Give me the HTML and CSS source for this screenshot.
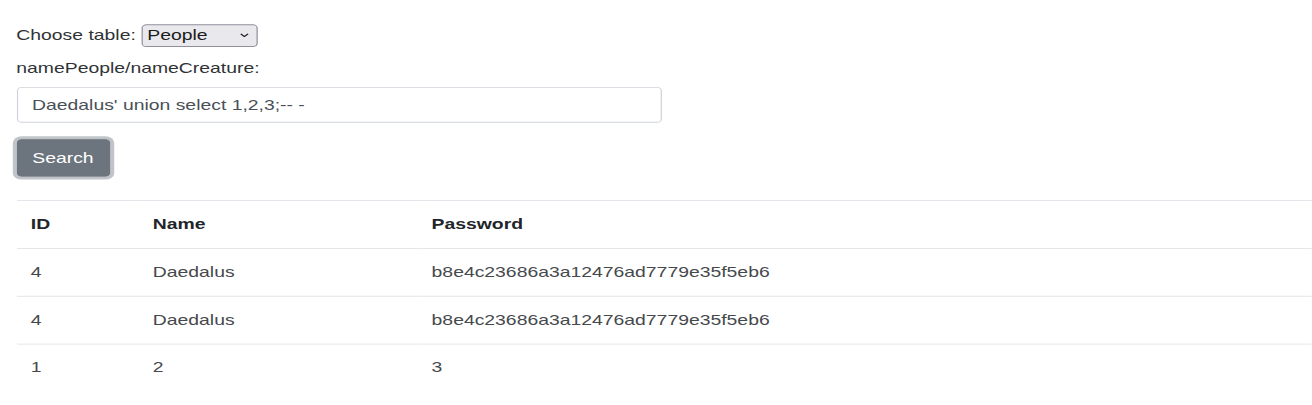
FILE: index.html
```html
<!DOCTYPE html>
<html lang="en">
<head>
<meta charset="utf-8">
<title>Search</title>
<link rel="stylesheet" href="styles.css">
</head>
<body>
<div class="page">
  <form class="search-form">
    <div class="choose-row">
      <label for="table-choice">Choose table: </label>
      <select id="table-choice" class="table-select">
        <option>People</option>
        <option>Creatures</option>
      </select>
    </div>
    <label class="field-label" for="name">namePeople/nameCreature:</label>
    <input class="form-control" id="name" type="text" value="Daedalus' union select 1,2,3;-- -">
    <button class="btn" type="button">Search</button>
  </form>
  <table class="data-table">
    <thead>
      <tr><th class="col-id">ID</th><th class="col-name">Name</th><th>Password</th></tr>
    </thead>
    <tbody>
      <tr><td>4</td><td>Daedalus</td><td>b8e4c23686a3a12476ad7779e35f5eb6</td></tr>
      <tr><td>4</td><td>Daedalus</td><td>b8e4c23686a3a12476ad7779e35f5eb6</td></tr>
      <tr><td>1</td><td>2</td><td>3</td></tr>
    </tbody>
  </table>
</div>
</body>
</html>
```
FILE: styles.css
```css
html, body {
  margin: 0;
  padding: 0;
  background: #ffffff;
}

body {
  font-family: "Liberation Sans", Arial, sans-serif;
  font-size: 16px;
  line-height: 24px;
  color: #303336;
  overflow: hidden;
}

/* the whole page is drawn slightly wide and short, as in the reference;
   the negative bottom margin gives back the height the scale removes */
.page {
  width: 1084.3px;
  box-sizing: border-box;
  padding: 27.6px 0 0 13.5px;
  margin-bottom: -60px;
  transform: scale(1.21, 0.87);
  transform-origin: 0 0;
}

.search-form {
  display: flex;
  flex-direction: column;
  align-items: flex-start;
}

.choose-row {
  display: flex;
  align-items: center;
  height: 26.4px;
  white-space: pre;
}

.table-select {
  appearance: none;
  -webkit-appearance: none;
  box-sizing: border-box;
  height: 26.4px;
  width: 96.7px;
  margin: 0;
  padding: 0 0 0 4px;
  font-family: inherit;
  font-size: 16px;
  line-height: 22px;
  color: #1b1b1b;
  background-color: #e9e9ed;
  background-image: url("data:image/svg+xml,%3Csvg xmlns='http://www.w3.org/2000/svg' width='8' height='5' viewBox='0 0 8 5'%3E%3Cpath d='M1 1l3 3 3-3' fill='none' stroke='%23222' stroke-width='1.3'/%3E%3C/svg%3E");
  background-repeat: no-repeat;
  background-position: right 6px center;
  border: 1px solid #8f8f9d;
  border-radius: 4px;
}

.field-label {
  display: block;
  margin-top: 13.2px;
}

.form-control {
  box-sizing: border-box;
  width: 533.9px;
  height: 41.4px;
  margin-top: 8.8px;
  padding: 0 12px;
  font-family: inherit;
  font-size: 16px;
  color: #495057;
  background: #ffffff;
  border: 1px solid #ced4da;
  border-radius: 4px;
}

.btn {
  box-sizing: border-box;
  height: 43.7px;
  margin-top: 18.4px;
  padding: 0 12.2px;
  font-family: inherit;
  font-size: 16px;
  color: #ffffff;
  background: #6c757d;
  border: 1px solid #6c757d;
  border-radius: 4px;
  box-shadow: 0 0 0 3.4px rgba(130, 138, 145, 0.5);
}

.data-table {
  width: 100%;
  margin-top: 26.5px;
  border-collapse: collapse;
  table-layout: fixed;
}

.data-table th,
.data-table td {
  box-sizing: border-box;
  padding: 15px 12px 15.17px;
  border-top: 1px solid #dee2e6;
  text-align: left;
  vertical-align: top;
}

.data-table th {
  font-weight: bold;
  color: #212529;
}

.data-table td {
  color: #46494c;
}

.col-id {
  width: 100.8px;
}

.col-name {
  width: 230.4px;
}
```
